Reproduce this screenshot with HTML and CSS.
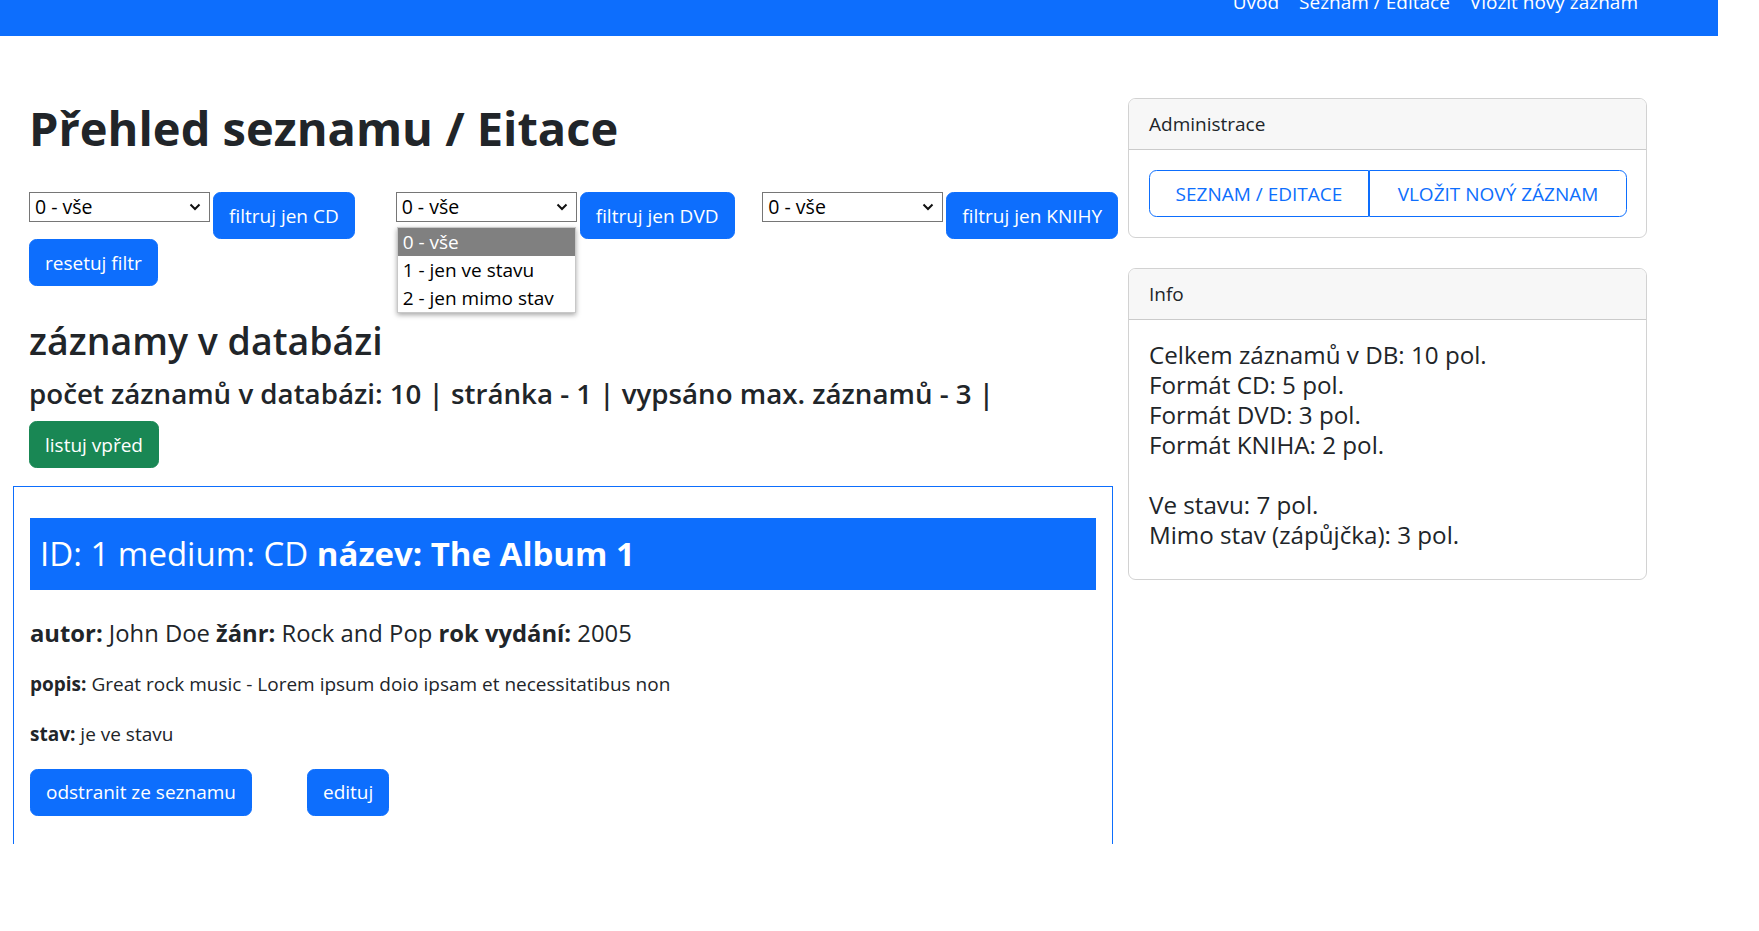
FILE: index.html
```html
<!DOCTYPE html>
<html lang="cs">
<head>
<meta charset="utf-8">
<title>Přehled seznamu / Eitace</title>
<link rel="stylesheet" href="styles.css">
</head>
<body>
<div class="page">
  <nav class="navbar">
    <ul class="nav-links">
      <li><a href="#">Úvod</a></li>
      <li><a href="#">Seznam / Editace</a></li>
      <li><a href="#">Vložit nový záznam</a></li>
    </ul>
  </nav>
  <div class="layout">
    <main class="main">
      <div class="intro">
        <h1 class="title">Přehled seznamu / Eitace</h1>
        <div class="filters">
          <form class="filter">
            <div class="select-wrap">
              <div class="select"><span>0 - vše</span><svg class="chev" viewBox="0 0 12 8" width="12" height="8"><path d="M1.5 1.5 L6 6 L10.5 1.5" fill="none" stroke="#111" stroke-width="2"/></svg></div>
            </div>
            <button type="button" class="btn btn-primary">filtruj jen CD</button>
          </form>
          <form class="filter">
            <div class="select-wrap">
              <div class="select"><span>0 - vše</span><svg class="chev" viewBox="0 0 12 8" width="12" height="8"><path d="M1.5 1.5 L6 6 L10.5 1.5" fill="none" stroke="#111" stroke-width="2"/></svg></div>
              <ul class="listbox">
                <li class="opt active">0 - vše</li>
                <li class="opt">1 - jen ve stavu</li>
                <li class="opt">2 - jen mimo stav</li>
              </ul>
            </div>
            <button type="button" class="btn btn-primary">filtruj jen DVD</button>
          </form>
          <form class="filter">
            <div class="select-wrap">
              <div class="select"><span>0 - vše</span><svg class="chev" viewBox="0 0 12 8" width="12" height="8"><path d="M1.5 1.5 L6 6 L10.5 1.5" fill="none" stroke="#111" stroke-width="2"/></svg></div>
            </div>
            <button type="button" class="btn btn-primary">filtruj jen KNIHY</button>
          </form>
          <div class="reset-row">
            <button type="button" class="btn btn-primary">resetuj filtr</button>
          </div>
        </div>
        <h2 class="db-title">záznamy v databázi</h2>
        <h4 class="db-count">počet záznamů v databázi: 10 | stránka - 1 | vypsáno max. záznamů - 3 |</h4>
        <button type="button" class="btn btn-success">listuj vpřed</button>
      </div>
      <article class="record">
        <h3 class="record-title">ID: 1 medium: CD <strong>název: The Album 1</strong></h3>
        <p class="record-meta"><strong>autor:</strong> John Doe <strong>žánr:</strong> Rock and Pop <strong>rok vydání:</strong> 2005</p>
        <p class="record-text"><strong>popis:</strong> Great rock music - Lorem ipsum doio ipsam et necessitatibus non</p>
        <p class="record-text"><strong>stav:</strong> je ve stavu</p>
        <div class="record-actions">
          <button type="button" class="btn btn-primary">odstranit ze seznamu</button>
          <button type="button" class="btn btn-primary">edituj</button>
        </div>
      </article>
    </main>
    <aside class="sidebar">
      <section class="card">
        <div class="card-header">Administrace</div>
        <div class="card-body">
          <div class="btn-group">
            <a href="#" class="btn-outline first">SEZNAM / EDITACE</a>
            <a href="#" class="btn-outline last">VLOŽIT NOVÝ ZÁZNAM</a>
          </div>
        </div>
      </section>
      <section class="card info">
        <div class="card-header">Info</div>
        <div class="card-body">
          <h5 class="info-text">Celkem záznamů v DB: 10 pol.<br>Formát CD: 5 pol.<br>Formát DVD: 3 pol.<br>Formát KNIHA: 2 pol.<br><br>Ve stavu: 7 pol.<br>Mimo stav (zápůjčka): 3 pol.</h5>
        </div>
      </section>
    </aside>
  </div>
</div>
</body>
</html>
```

FILE: styles.css
```css
* { box-sizing: border-box; }

html, body {
  margin: 0;
  padding: 0;
  background: #fff;
}

body {
  font-family: "Open Sans", "Noto Sans", sans-serif;
  font-size: 19px;
  line-height: 30px;
  color: #212529;
}

.page {
  width: 1718px;
  height: 844px;
  overflow: hidden;
  background: #fff;
}

/* navbar */
.navbar {
  height: 36px;
  background: #0d6efd;
  overflow: hidden;
  display: flex;
  justify-content: flex-end;
  padding-right: 70px;
}

.nav-links {
  list-style: none;
  margin: -13px 0 0 0;
  padding: 0;
  display: flex;
}

.nav-links a {
  display: block;
  padding: 0 10px;
  color: #fff;
  text-decoration: none;
  font-size: 19px;
  line-height: 30px;
}

/* layout */
.layout {
  display: flex;
  gap: 15px;
  padding: 62px 0 0 13px;
}

.main {
  width: 1100px;
  flex: none;
}

.intro {
  padding: 0 16px;
}

h1, h2, h3, h4, h5 {
  margin: 0;
  font-weight: 600;
}

.title {
  font-size: 47px;
  line-height: 60px;
  font-weight: 700;
  margin-bottom: 34px;
}

/* filters */
.filters {
  display: grid;
  grid-template-columns: repeat(3, 366.67px);
  width: 1100px;
  align-items: start;
}

.filter {
  display: flex;
  align-items: flex-start;
  gap: 3px;
  margin: 0;
}

.select-wrap {
  position: relative;
}

.select {
  width: 181px;
  height: 30px;
  border: 1px solid #767676;
  background: #fff;
  display: flex;
  align-items: center;
  justify-content: space-between;
  padding: 0 8px 0 5px;
  font-size: 19.5px;
  color: #000;
}

.chev {
  display: block;
}

.listbox {
  position: absolute;
  top: 35px;
  left: 1px;
  width: 179px;
  margin: 0;
  padding: 0;
  list-style: none;
  background: #fff;
  border: 1px solid #c8c8c8;
  box-shadow: 0 2px 5px rgba(0, 0, 0, 0.35);
  z-index: 5;
}

.opt {
  height: 28px;
  line-height: 28px;
  padding: 0 5px;
  font-size: 19px;
  color: #000;
}

.opt.active {
  background: #808080;
  color: #fff;
}

.reset-row {
  grid-column: 1 / -1;
}

/* buttons */
.btn {
  display: inline-block;
  font-family: inherit;
  font-size: 19px;
  line-height: 30px;
  padding: 7.5px 15px;
  border: 1px solid transparent;
  border-radius: 7.5px;
  color: #fff;
  cursor: pointer;
  white-space: nowrap;
}

.btn-primary {
  background: #0d6efd;
  border-color: #0d6efd;
}

.btn-success {
  background: #198754;
  border-color: #198754;
}

.db-title {
  font-size: 37.5px;
  line-height: 48px;
  margin-top: 31px;
  margin-bottom: 10px;
}

.db-count {
  font-size: 27.7px;
  line-height: 36px;
  margin-bottom: 10px;
}

/* record */
.record {
  margin-top: 18px;
  border: 1px solid #0d6efd;
  padding: 31px 16px 60px;
}

.record-title {
  background: #0d6efd;
  color: #fff;
  font-size: 33px;
  line-height: 42px;
  font-weight: 400;
  padding: 15px 10px;
  margin-bottom: 24.5px;
}

.record-title strong {
  font-weight: 700;
}

.record-meta {
  font-size: 23.8px;
  line-height: 37.5px;
  margin: 0 0 16.5px;
}

.record-text {
  font-size: 19px;
  line-height: 30px;
  margin: 0 0 20px;
}

strong {
  font-weight: 700;
}

.record-actions {
  display: flex;
  gap: 55px;
}

/* sidebar */
.sidebar {
  width: 519px;
  flex: none;
  padding-top: 0;
  display: flex;
  flex-direction: column;
  gap: 30px;
}

.card {
  border: 1px solid rgba(0, 0, 0, 0.175);
  border-radius: 7.5px;
  overflow: hidden;
}

.card-header {
  background: #f7f7f7;
  border-bottom: 1px solid rgba(0, 0, 0, 0.175);
  padding: 10px 20px;
  font-size: 19px;
  line-height: 30px;
}

.card-body {
  padding: 20px;
}

.btn-group {
  display: flex;
}

.btn-outline {
  display: block;
  flex: none;
  border: 1px solid #0d6efd;
  color: #0d6efd;
  text-decoration: none;
  font-size: 19px;
  line-height: 30px;
  text-align: center;
  padding: 7.5px 0;
}

.btn-outline.first {
  width: 220px;
  border-radius: 7.5px 0 0 7.5px;
}

.btn-outline.last {
  width: 258px;
  border-radius: 0 7.5px 7.5px 0;
}

.info-text {
  font-size: 24.2px;
  line-height: 30px;
  font-weight: 400;
  margin-bottom: 9px;
}
```
